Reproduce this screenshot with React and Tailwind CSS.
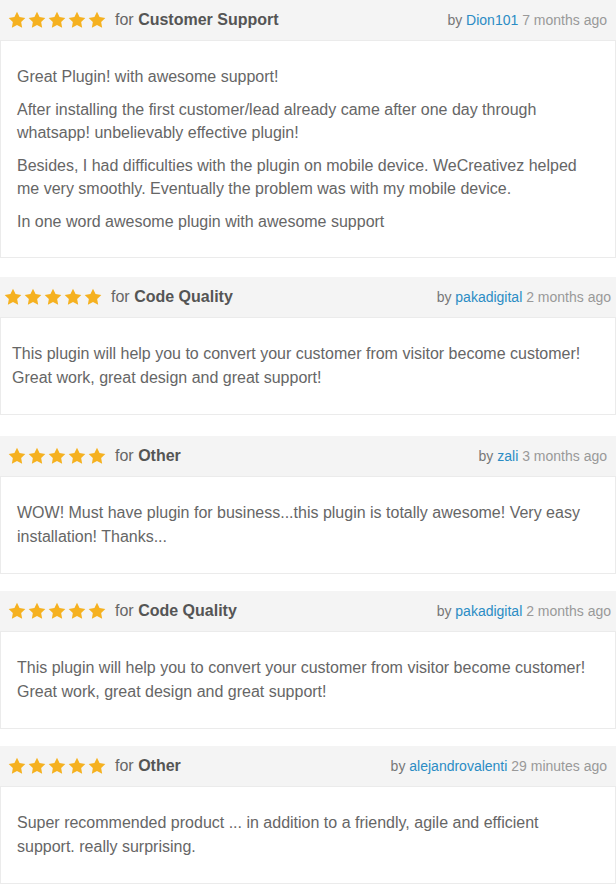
import React from "react";

const reviews = [
  {
    category: "Customer Support",
    user: "Dion101",
    time: "7 months ago",
    gap: "",
    head: "pl-[7px] pr-[9px]",
    body: "pl-4 leading-[23px] space-y-[10px]",
    paragraphs: [
      ["Great Plugin! with awesome support!"],
      [
        "After installing the first customer/lead already came after one day through",
        "whatsapp! unbelievably effective plugin!",
      ],
      [
        "Besides, I had difficulties with the plugin on mobile device. WeCreativez helped",
        "me very smoothly. Eventually the problem was with my mobile device.",
      ],
      ["In one word awesome plugin with awesome support"],
    ],
  },
  {
    category: "Code Quality",
    user: "pakadigital",
    time: "2 months ago",
    gap: "mt-[19px]",
    head: "pl-[3px] pr-[5px]",
    body: "pl-[11px] leading-6",
    paragraphs: [
      [
        "This plugin will help you to convert your customer from visitor become customer!",
        "Great work, great design and great support!",
      ],
    ],
  },
  {
    category: "Other",
    user: "zali",
    time: "3 months ago",
    gap: "mt-[21px]",
    head: "pl-[7px] pr-[9px]",
    body: "pl-4 leading-6",
    paragraphs: [
      [
        "WOW! Must have plugin for business...this plugin is totally awesome! Very easy",
        "installation! Thanks...",
      ],
    ],
  },
  {
    category: "Code Quality",
    user: "pakadigital",
    time: "2 months ago",
    gap: "mt-[17px]",
    head: "pl-[7px] pr-[5px]",
    body: "pl-4 leading-6",
    paragraphs: [
      [
        "This plugin will help you to convert your customer from visitor become customer!",
        "Great work, great design and great support!",
      ],
    ],
  },
  {
    category: "Other",
    user: "alejandrovalenti",
    time: "29 minutes ago",
    gap: "mt-[17px]",
    head: "pl-[7px] pr-[9px]",
    body: "pl-4 leading-6",
    paragraphs: [
      [
        "Super recommended product ... in addition to a friendly, agile and efficient",
        "support. really surprising.",
      ],
    ],
  },
];

const Star = () => (
  <svg className="w-5 h-5" viewBox="0 0 24 24" fill="#f5b120">
    <path d="M12 2.2l3.05 6.3 6.95 1-5.02 4.86 1.2 6.88L12 17.98l-6.18 3.26 1.2-6.88L2 9.5l6.95-1z" />
  </svg>
);

const App = () => {
  return (
    <div
      className="w-[616px] min-h-screen bg-white"
      style={{ fontFamily: '"Liberation Sans", Arial, sans-serif' }}
    >
      {reviews.map((r, i) => (
        <div className={r.gap} key={i}>
          {/* header */}
          <div
            className={`flex items-center justify-between h-10 bg-[#f4f4f4] ${r.head}`}
          >
            <div className="flex items-center">
              <div className="flex">
                {[0, 1, 2, 3, 4].map((s) => (
                  <Star key={s} />
                ))}
              </div>
              <p className="ml-2 text-[16px] text-[#666]">
                for <span className="font-bold text-[#555]">{r.category}</span>
              </p>
            </div>
            <p className="text-[14px] text-[#777]">
              by <span className="text-[#2b8cc4]">{r.user}</span>{" "}
              <span className="text-[#999]">{r.time}</span>
            </p>
          </div>

          {/* body */}
          <div
            className={`border border-[#ebebeb] bg-white py-6 pr-4 text-[16px] text-[#666] ${r.body}`}
          >
            {r.paragraphs.map((lines, j) => (
              <p key={j}>
                {lines.map((line, k) => (
                  <span className="block whitespace-nowrap" key={k}>
                    {line}
                  </span>
                ))}
              </p>
            ))}
          </div>
        </div>
      ))}
    </div>
  );
};

export default App;
